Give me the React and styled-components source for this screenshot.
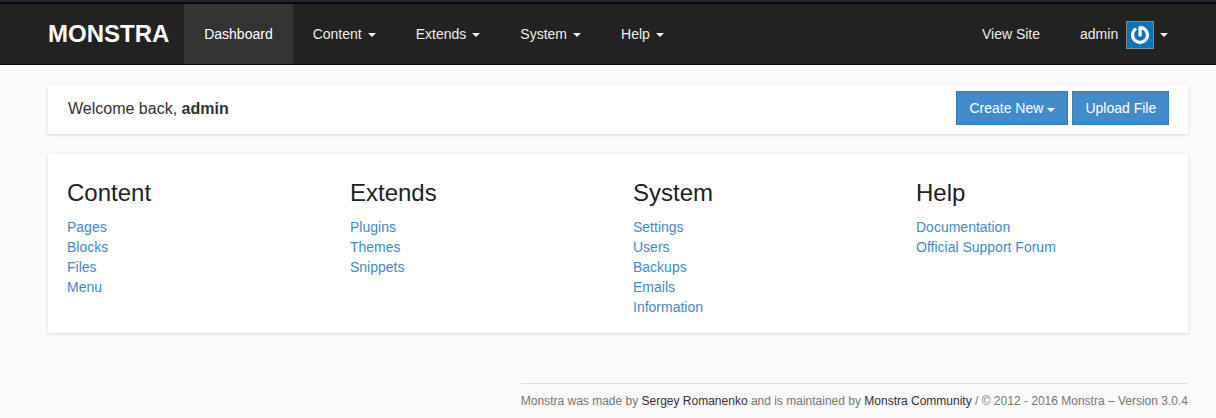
import React from "react";
import styled, { createGlobalStyle } from "styled-components";

const GlobalStyle = createGlobalStyle`
  *, *::before, *::after { box-sizing: border-box; }
  body {
    margin: 0;
    background: #fafafa;
    color: #333;
    font: 14px/20px "Liberation Sans", Arial, sans-serif;
  }
  a { text-decoration: none; }
`;

const Page = styled.div`
  height: 418px;
  overflow: hidden;
`;

const WindowEdge = styled.div`
  height: 4px;
  background: #22252f;
  border-bottom: 2px solid #07080b;
`;

const Navbar = styled.header`
  height: 61px;
  padding: 0 27.8px 0 48px;
  display: flex;
  background: #222;
  border-bottom: 1px solid #080808;
`;

const Brand = styled.a`
  width: 136.2px;
  color: #fff;
  font-size: 24px;
  font-weight: bold;
  line-height: 60px;
`;

const NavGroup = styled.nav`
  display: flex;
  margin-left: ${(p) => (p.$right ? "auto" : "0")};
  margin-right: ${(p) => (p.$right ? "0" : "auto")};
`;

const NavItem = styled.a`
  display: flex;
  align-items: center;
  height: 60px;
  padding: 0 20px;
  color: ${(p) => (p.$active ? "#fff" : "#eee")};
  background: ${(p) => (p.$active ? "#333" : "transparent")};
`;

const Caret = styled.span`
  display: inline-block;
  vertical-align: middle;
  margin-left: ${(p) => p.$gap ?? 6}px;
  margin-top: ${(p) => p.$drop ?? 1}px;
  border-top: 4px solid currentColor;
  border-left: 4px solid transparent;
  border-right: 4px solid transparent;
`;

const Avatar = styled.svg`
  width: 28px;
  height: 28px;
  margin: 2px 0 0 8px;
  border: 1px solid #888;
  background: #0a74b9;
`;

const Main = styled.main`
  padding: 20px 28px 0 48px;
`;

const Panel = styled.section`
  background: #fff;
  box-shadow: 0 1px 3px rgba(0, 0, 0, 0.14);
`;

const WelcomePanel = styled(Panel)`
  height: 49px;
  padding: 0 18.8px 0 20px;
  display: flex;
  justify-content: space-between;
  align-items: center;
  font-size: 16px;
`;

const Greeting = styled.span`
  margin-top: -2px;
`;

const Actions = styled.div`
  display: flex;
  gap: 4px;
  margin-top: -3px;
`;

const Button = styled.button`
  display: flex;
  align-items: center;
  height: 34px;
  padding: 0 12px;
  border: 1px solid #357ebd;
  background: #428bca;
  color: #fff;
  font: inherit;
  font-size: 14px;
`;

const LinksPanel = styled(Panel)`
  display: grid;
  grid-template-columns: repeat(4, 283px);
  height: 179px;
  margin-top: 20px;
  padding: 26px 0 0 19px;
  overflow: hidden;
`;

const Heading = styled.h3`
  margin: 0 0 11px;
  color: #222;
  font-size: 24px;
  font-weight: normal;
  line-height: 26px;
`;

const Link = styled.a`
  display: block;
  color: #428bca;
`;

const Footer = styled.footer`
  width: fit-content;
  margin: 50px 0 0 auto;
  padding-top: 8px;
  border-top: 1px solid #ddd;
  color: #777;
  font-size: 12px;
  line-height: 18px;
  white-space: nowrap;
  a { color: #333; }
`;

const sections = [
  { title: "Content", links: ["Pages", "Blocks", "Files", "Menu"] },
  { title: "Extends", links: ["Plugins", "Themes", "Snippets"] },
  { title: "System", links: ["Settings", "Users", "Backups", "Emails", "Information"] },
  { title: "Help", links: ["Documentation", "Official Support Forum"] },
];

export default function App() {
  return (
    <Page>
      <GlobalStyle />
      <WindowEdge />
      <Navbar>
        <Brand href="#">MONSTRA</Brand>
        <NavGroup>
          <NavItem href="#" $active>Dashboard</NavItem>
          {sections.map((s) => (
            <NavItem href="#" key={s.title}>{s.title}<Caret /></NavItem>
          ))}
        </NavGroup>
        <NavGroup $right>
          <NavItem href="#">View Site</NavItem>
          <NavItem href="#">
            admin
            <Avatar viewBox="0 0 26 26" fill="none" stroke="#fff">
              <path
                d="M8 7.4A7.5 7.5 0 1 0 18 7.4Q16.2 5.7 13.1 5.7V13"
                strokeWidth="3.3"
                strokeLinecap="round"
                strokeLinejoin="round"
              />
            </Avatar>
            <Caret />
          </NavItem>
        </NavGroup>
      </Navbar>
      <Main>
        <WelcomePanel>
          <Greeting>Welcome back, <b>admin</b></Greeting>
          <Actions>
            <Button>Create New<Caret $gap={4} $drop={3} /></Button>
            <Button>Upload File</Button>
          </Actions>
        </WelcomePanel>
        <LinksPanel>
          {sections.map((s) => (
            <div key={s.title}>
              <Heading>{s.title}</Heading>
              {s.links.map((l) => <Link href="#" key={l}>{l}</Link>)}
            </div>
          ))}
        </LinksPanel>
        <Footer>
          Monstra was made by <a href="#">Sergey Romanenko</a> and is maintained by{" "}
          <a href="#">Monstra Community</a> / © 2012 - 2016 Monstra – Version 3.0.4
        </Footer>
      </Main>
    </Page>
  );
}
